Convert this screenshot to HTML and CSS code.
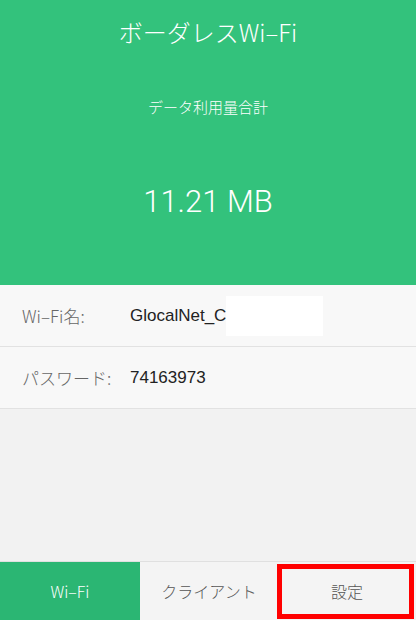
FILE: index.html
```html
<!DOCTYPE html>
<html lang="ja">
<head>
  <meta charset="UTF-8" />
  <meta name="viewport" content="width=device-width, initial-scale=1.0"/>
  <title>ボーダレスWi-Fi</title>
  <link rel="stylesheet" href="styles.css">
</head>
<body>
  <div class="app">
    <div class="header">
      <h1 class="title">ボーダレスWi&#8211;Fi</h1>
      <p class="caption">データ利用量合計</p>
      <p class="usage">11.21 MB</p>
    </div>

    <div class="info">
      <div class="row">
        <span class="label">Wi&#8211;Fi名:</span>
        <span class="value">GlocalNet_C</span>
        <span class="mask"></span>
      </div>
      <div class="row">
        <span class="label">パスワード:</span>
        <span class="value">74163973</span>
      </div>
    </div>

    <div class="spacer"></div>

    <div class="tabs">
      <div class="tab active">Wi&#8211;Fi</div>
      <div class="tab">クライアント</div>
      <div class="tab marked">設定</div>
    </div>
  </div>
</body>
</html>
```

FILE: styles.css
```css
* { box-sizing: border-box; }
html, body {
  margin: 0;
  height: 100%;
}
body {
  font-family: "Noto Sans CJK JP", "Noto Sans", sans-serif;
  background: #f2f2f2;
  color: #222;
}
.app {
  display: flex;
  flex-direction: column;
  height: 620px;
}
.header {
  background: #33c27c;
  color: #fff;
  height: 285px;
  text-align: center;
  padding-top: 14px;
}
.title {
  margin: 0;
  font-size: 24px;
  font-weight: 300;
  line-height: 36px;
}
.caption {
  margin: 45px 0 0;
  font-size: 15px;
  font-weight: 300;
  line-height: 24px;
}
.usage {
  margin: 63px 0 0;
  font-family: Roboto, "Liberation Sans", sans-serif;
  font-size: 31px;
  font-weight: 300;
  line-height: 40px;
}
.info { background: #f8f8f8; }
.row {
  position: relative;
  display: flex;
  align-items: center;
  height: 62px;
  padding-left: 22px;
  font-size: 17px;
  border-bottom: 1px solid #e2e2e2;
}
.label {
  width: 108px;
  color: #666;
  font-weight: 300;
}
.value {
  font-family: "Liberation Sans", Roboto, sans-serif;
  font-size: 17px;
  color: #222;
}
/* redaction box over the network name */
.mask {
  position: absolute;
  left: 226px;
  top: 11px;
  width: 97px;
  height: 40px;
  background: #fff;
}
.spacer { flex: 1; }
.tabs {
  display: flex;
  height: 59px;
  border-top: 1px solid #e0e0e0;
  background: #f4f4f4;
}
.tab {
  flex: 1;
  display: flex;
  align-items: center;
  justify-content: center;
  font-size: 16px;
  font-weight: 300;
  color: #555;
}
.tab.active {
  background: #2bb673;
  color: #fff;
  flex: 0 0 140px;
}
.tab.marked { position: relative; }
.tab.marked::after {
  content: "";
  position: absolute;
  left: -1px;
  right: 2px;
  top: 2px;
  bottom: 1px;
  border: 5px solid #ff0000;
}
```
